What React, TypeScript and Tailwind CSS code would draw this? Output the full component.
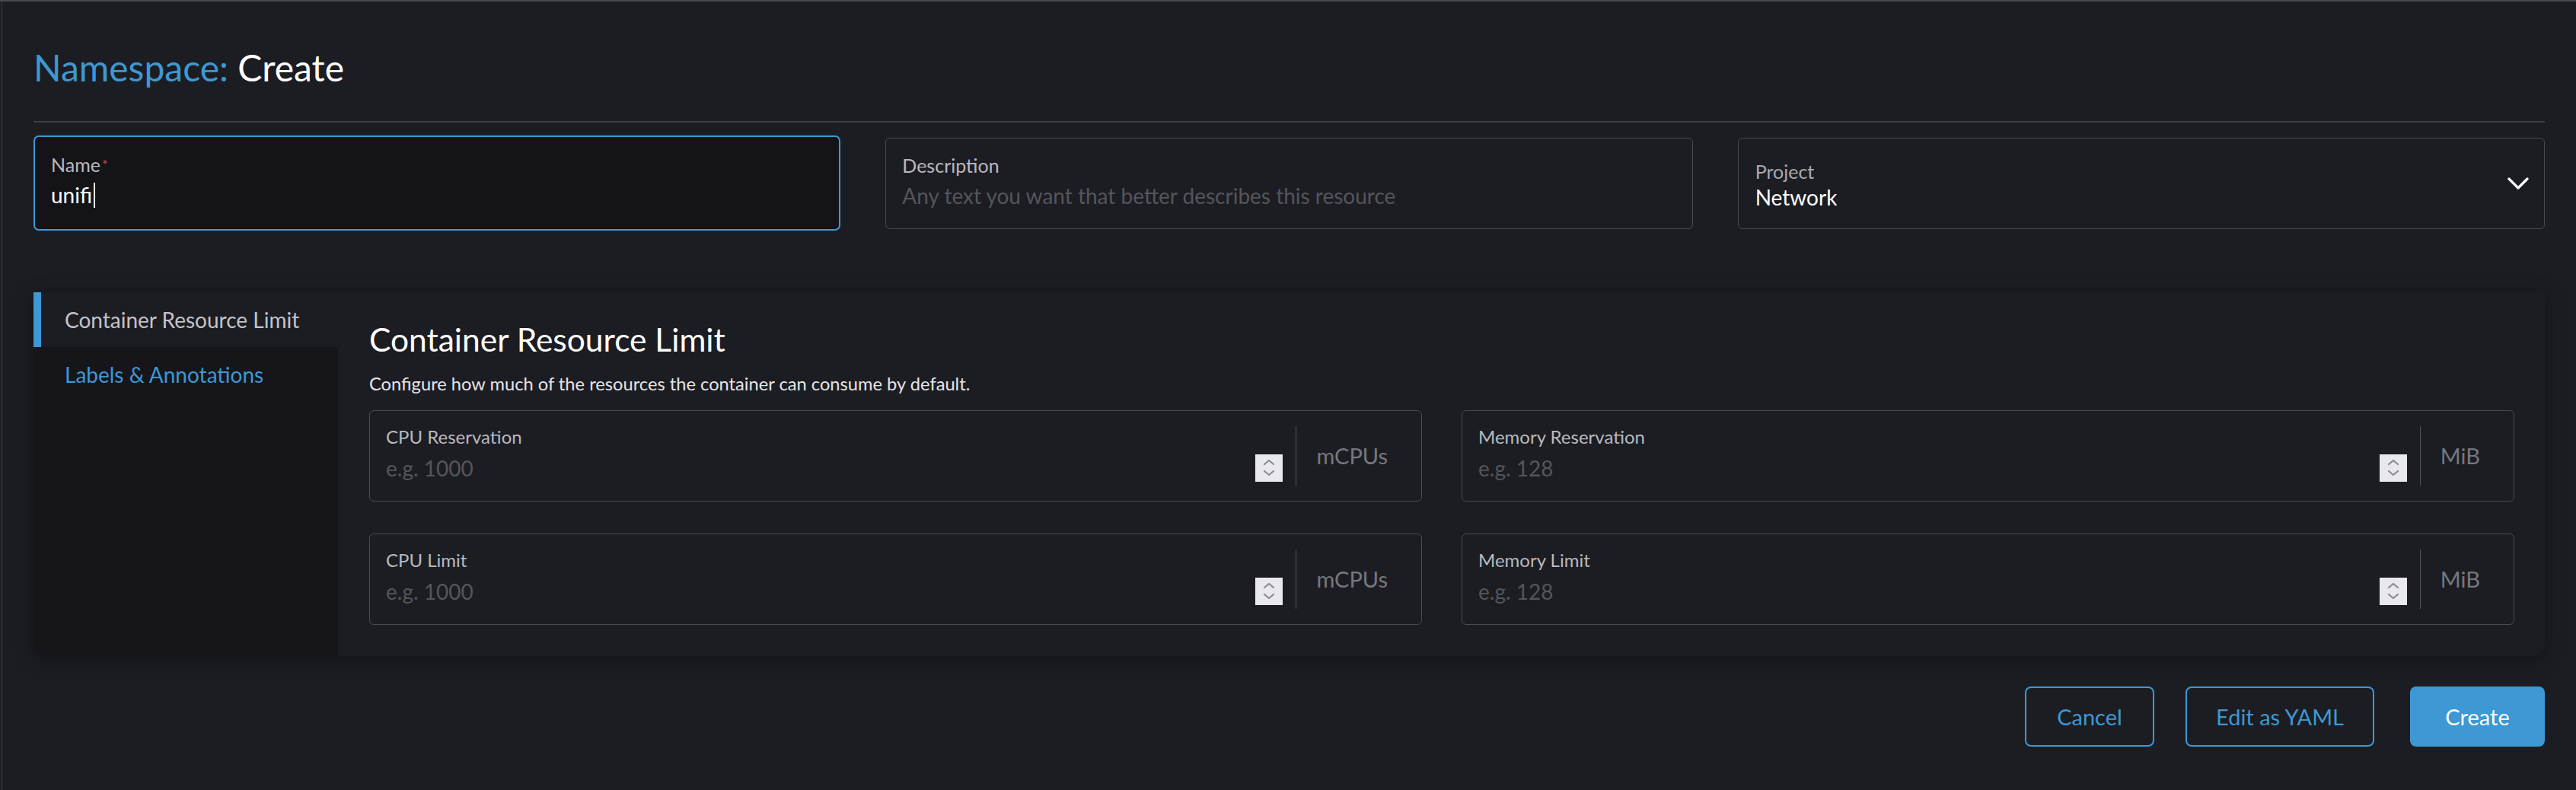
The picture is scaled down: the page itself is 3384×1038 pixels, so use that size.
import React from "react";

const Spinner = () => (
  <div className="w-[36px] h-[36px] bg-[#e8e8ed] flex items-center justify-center">
    <svg width="16" height="26" viewBox="0 0 16 26" fill="none">
      <polyline points="2,8 8,3 14,8" stroke="#8b8b93" strokeWidth="2.2" strokeLinecap="round" strokeLinejoin="round" />
      <polyline points="2,17 8,22 14,17" stroke="#8b8b93" strokeWidth="2.2" strokeLinecap="round" strokeLinejoin="round" />
    </svg>
  </div>
);

const UnitInput = ({ label, placeholder, unit }: { label: string; placeholder: string; unit: string }) => (
  <div className="h-[120px] flex border border-[#4a4a50] rounded-[6px] bg-[#1c1d22]">
    <div className="flex-1 pl-[21px] pt-[19px]">
      <div className="text-[24px] leading-[29px] text-[#b9b9bf]">{label}</div>
      <div className="mt-[10px] text-[28px] leading-[34px] text-[#54555b]">{placeholder}</div>
    </div>
    <div className="self-start mt-[57px] mr-[17px]">
      <Spinner />
    </div>
    <div className="w-px bg-[#54545a] my-[20px]" />
    <div className="flex items-center pl-[26px] pr-[44px] text-[29px] text-[#77777f]">{unit}</div>
  </div>
);

const App = () => {
  return (
    <div className="w-[3384px] h-[1038px] bg-[#1c1d22] border-t-2 border-[#48484e] overflow-hidden font-[Lato,sans-serif]">
      <div className="ml-[2px] h-full border-l border-[#3c3c42] pl-[41px] pr-[41px]">
        <h1 className="pt-[58px] text-[48px] leading-[58px] font-normal">
          <span className="text-[#3d98d3]">Namespace:</span> <span className="text-white">Create</span>
        </h1>
        <div className="mt-[41px] h-[2px] bg-[#3f4046]" />

        {/* name / description / project */}
        <div className="mt-[17px] grid grid-cols-3 gap-x-[59px] items-center">
          <div className="h-[125px] border-2 border-[#3d98d3] rounded-[7px] bg-[#141418] pl-[21px] pt-[21px]">
            <div className="text-[25px] leading-[30px] text-[#b9b9bf]">
              Name<span className="text-[#e0393e] text-[18px] align-top ml-[2px]">*</span>
            </div>
            <div className="mt-[7px] text-[28px] leading-[36px] text-white flex items-center">
              unifi
              <span className="inline-block w-[2px] h-[33px] bg-white ml-[2px]" />
            </div>
          </div>
          <div className="h-[120px] border border-[#4a4a50] rounded-[6px] pl-[21px] pt-[20px]">
            <div className="text-[25px] leading-[30px] text-[#b9b9bf]">Description</div>
            <div className="mt-[7px] text-[28px] leading-[36px] text-[#54555b]">
              Any text you want that better describes this resource
            </div>
          </div>
          <div className="h-[120px] border border-[#4a4a50] rounded-[6px] pl-[22px] pr-[19px] flex items-center">
            <div className="flex-1 pt-[6px]">
              <div className="text-[25px] leading-[30px] text-[#a9a9af]">Project</div>
              <div className="mt-[1px] text-[28px] leading-[36px] text-white">Network</div>
            </div>
            <svg width="30" height="18" viewBox="0 0 30 18" fill="none">
              <polyline points="3,3 15,15 27,3" stroke="#ffffff" strokeWidth="3.2" strokeLinecap="round" strokeLinejoin="round" />
            </svg>
          </div>
        </div>

        {/* tabbed section */}
        <div className="mt-[81px] flex rounded-b-[15px] shadow-[0_4px_24px_rgba(0,0,0,0.35)] bg-[#1c1d22]">
          <div className="w-[400px] shrink-0 bg-[#16161a] rounded-bl-[15px]">
            <div className="h-[72px] flex items-center border-l-[10px] border-[#3d98d3] bg-[#1c1d22] pl-[31px] text-[28px] text-[#c3c3c9]">
              Container Resource Limit
            </div>
            <div className="h-[72px] flex items-center pl-[41px] text-[28px] text-[#3d98d3]">
              Labels &amp; Annotations
            </div>
          </div>
          <div className="flex-1 pl-[41px] pr-[40px] pt-[36px] pb-[41px]">
            <h2 className="text-[42.5px] leading-[52px] text-white">Container Resource Limit</h2>
            <p className="mt-[18px] text-[23.7px] leading-[29px] text-[#e4e4e8]">
              Configure how much of the resources the container can consume by default.
            </p>
            <div className="mt-[20px] grid grid-cols-2 gap-x-[52px] gap-y-[42px]">
              <UnitInput label="CPU Reservation" placeholder="e.g. 1000" unit="mCPUs" />
              <UnitInput label="Memory Reservation" placeholder="e.g. 128" unit="MiB" />
              <UnitInput label="CPU Limit" placeholder="e.g. 1000" unit="mCPUs" />
              <UnitInput label="Memory Limit" placeholder="e.g. 128" unit="MiB" />
            </div>
          </div>
        </div>

        {/* footer buttons */}
        <div className="mt-[40px] flex justify-end text-[29px]">
          <button className="w-[170px] h-[79px] border-2 border-[#3d98d3] rounded-[8px] text-[#3d98d3]">Cancel</button>
          <button className="ml-[41px] w-[248px] h-[79px] border-2 border-[#3d98d3] rounded-[8px] text-[#3d98d3]">
            Edit as YAML
          </button>
          <button className="ml-[47px] w-[177px] h-[79px] rounded-[8px] bg-[#3d98d3] text-white">Create</button>
        </div>
      </div>
    </div>
  );
};

export default App;
